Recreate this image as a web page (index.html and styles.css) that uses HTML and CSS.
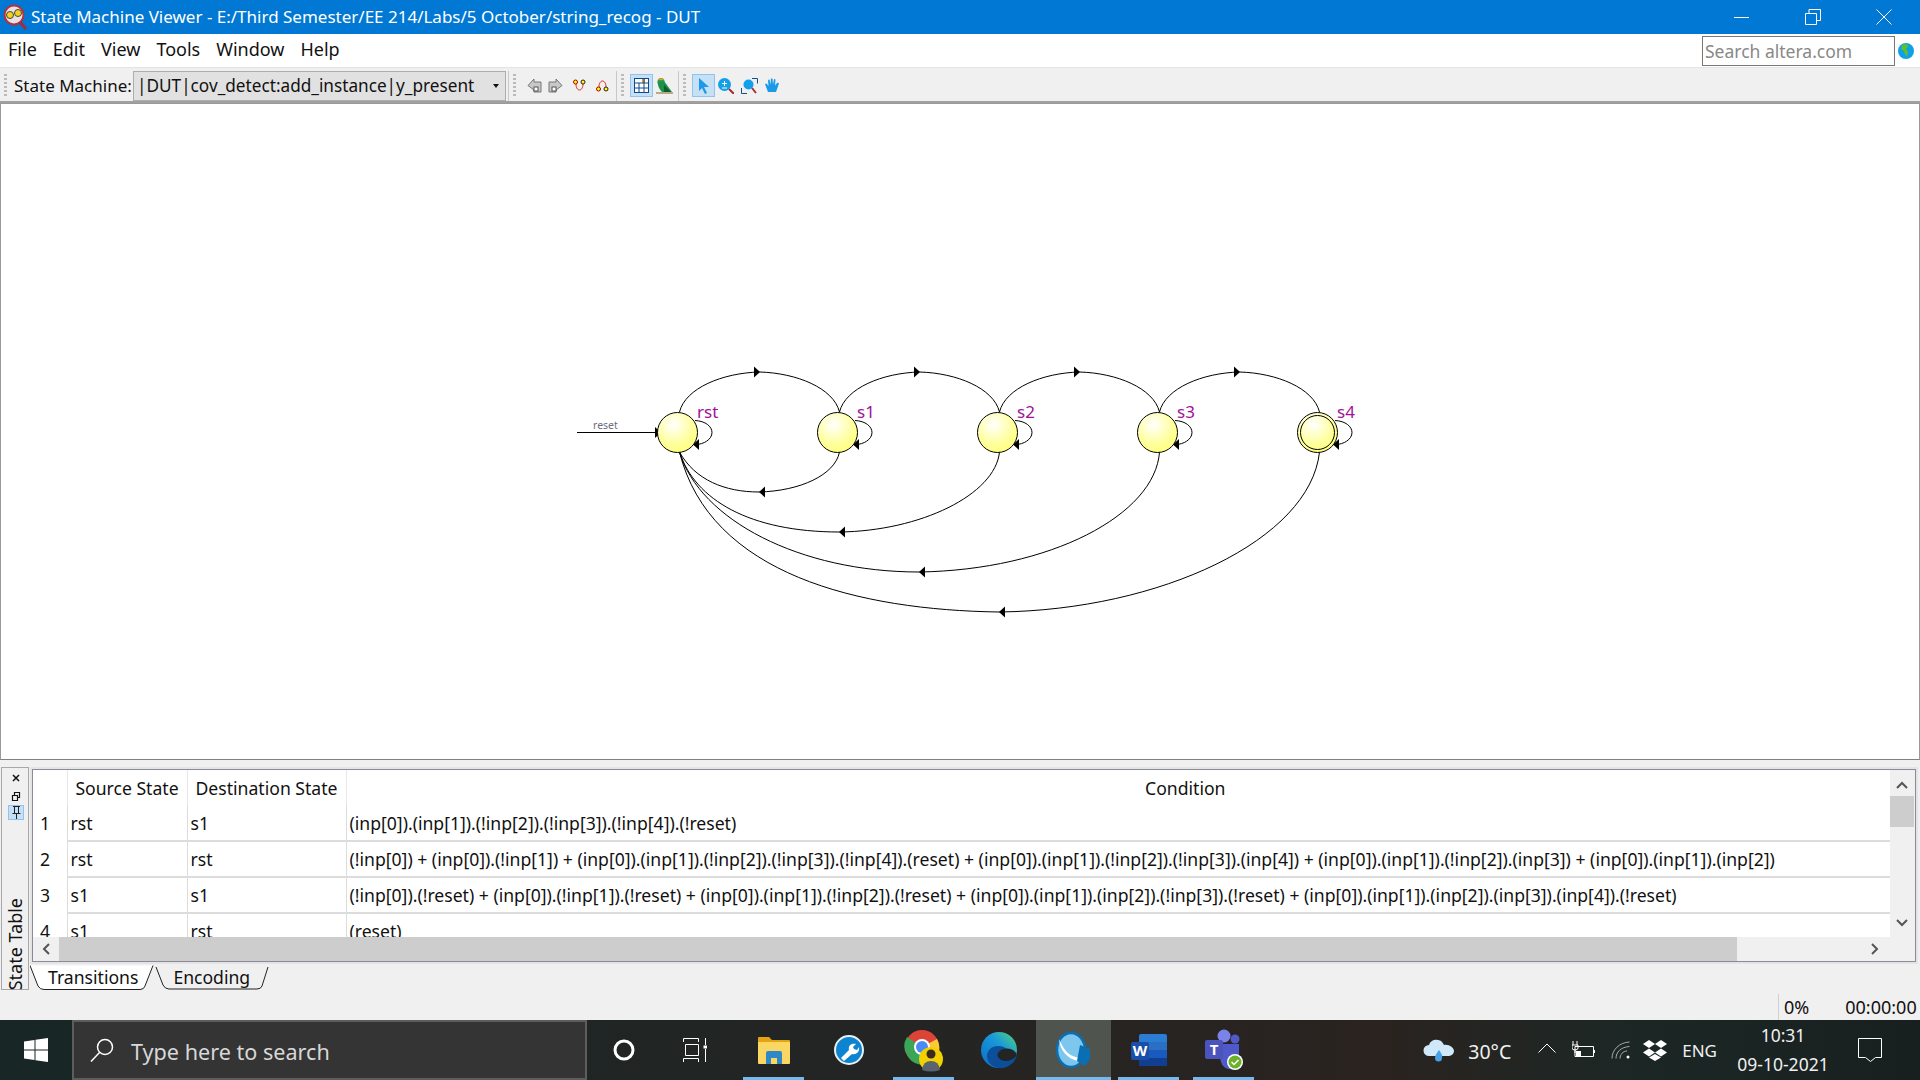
FILE: index.html

```html
<!DOCTYPE html>
<html lang="en">
<head>
    <meta charset="UTF-8">
    <title>State Machine Viewer</title>
    <link rel="stylesheet" href="styles.css">
</head>
<body>
<div class="app">
    <header class="titlebar">
        <svg class="app-icon" width="26" height="26" viewBox="0 0 26 26">
            <circle cx="12" cy="11" r="9.500" fill="#e8e0e4" stroke="#b03040" stroke-width="2"/>
            <circle cx="8" cy="11" r="3.500" fill="#f2d21f" stroke="#443"/>
            <circle cx="16" cy="9" r="3.500" fill="#f2d21f" stroke="#443"/>
            <path d="M18 18l6 7" stroke="#a02c3c" stroke-width="3"/>
        </svg>
        <span class="title-text">State Machine Viewer - E:/Third Semester/EE 214/Labs/5 October/string_recog - DUT</span>
        <div class="win-buttons">
            <svg width="16" height="16" viewBox="0 0 16 16"><path d="M0 8.500h15" stroke="#fff"/></svg>
            <svg width="16" height="16" viewBox="0 0 16 16" fill="none" stroke="#fff"><path d="M.5 4.500h11v11H.5zM4 4V.5h11.500v11H12"/></svg>
            <svg width="16" height="16" viewBox="0 0 16 16"><path d="M.5.5l15 15M15.500.5l-15 15" stroke="#fff"/></svg>
        </div>
    </header>

    <nav class="menubar">
        <a>File</a><a>Edit</a><a>View</a><a>Tools</a><a>Window</a><a>Help</a>
        <div class="search-altera">
            <div class="search-input">Search altera.com</div>
            <svg width="16" height="16" viewBox="0 0 16 16">
                <circle cx="8" cy="8" r="8" fill="#10a0e8"/>
                <path d="M4 2l5-1 1 3-2 2 2 3-1 5-2-3-1-3-3-2z" fill="#5fc02c"/>
            </svg>
        </div>
    </nav>

    <div class="toolbar">
        <span class="grip grip-first"></span>
        <label class="combo-label">State Machine:</label>
        <div class="combo">|DUT|cov_detect:add_instance|y_present<span class="combo-arrow"></span></div>
        <span class="sep"></span><span class="grip"></span>
        <div class="tools nav-tools">
            <svg width="15" height="15" viewBox="0 0 15 15"><path d="M7 1v3h7v10H7v-2L1 7.500 7 1z" fill="#c8c8c8" stroke="#777"/><rect x="7" y="9" width="4" height="4" fill="#fff" stroke="#555"/></svg>
            <svg width="15" height="15" viewBox="0 0 15 15"><path d="M8 1v3H1v10h7v-2l6-4.500L8 1z" fill="#c8c8c8" stroke="#777"/><rect x="4" y="9" width="4" height="4" fill="#fff" stroke="#555"/></svg>
            <svg width="13" height="14" viewBox="0 0 13 14" fill="none"><path d="M3 5c0 8 7 8 7 0" stroke="#d22"/><circle cx="2.500" cy="3" r="2" fill="#ff0" stroke="#a00"/><circle cx="10" cy="3" r="2" fill="#ff0" stroke="#222"/></svg>
            <svg width="13" height="14" viewBox="0 0 13 14" fill="none"><path d="M3 8c0-8 7-8 7 0" stroke="#d22"/><circle cx="2.500" cy="10" r="2" fill="#ff0" stroke="#a00"/><circle cx="10" cy="10" r="2" fill="#ff0" stroke="#222"/></svg>
        </div>
        <span class="sep"></span><span class="grip"></span>
        <div class="tools view-tools">
            <div class="tool-on">
                <svg width="15" height="15" viewBox="0 0 15 15"><rect x=".5" y=".5" width="14" height="14" fill="#fff" stroke="#0c4a90"/><rect x="8" y="1" width="3" height="4" fill="#f39a1e"/><path d="M1 5h13M1 10h13M5 5v9M10 1v13" stroke="#0c4a90"/></svg>
            </div>
            <svg width="17" height="17" viewBox="0 0 17 17"><path d="M0 16h17" stroke="#b9a98a" stroke-width="2"/><circle cx="5" cy="4.500" r="3.500" fill="#2fa050"/><path d="M2 3a3.500 3.500 0 0 1 6 0z" fill="#f09a20"/><path d="M1.500 5C2 10 4 13 6 15h10L8 4z" fill="#1f9048"/><path d="M8 8l7 7H8z" fill="#0b5f30"/></svg>
        </div>
        <span class="sep"></span><span class="grip"></span>
        <div class="tools zoom-tools">
            <div class="tool-on">
                <svg width="13" height="17" viewBox="0 0 13 17"><path d="M2 1l10 9H7l3 6-2 1-3-6-3 3z" fill="#1a9ae8"/></svg>
            </div>
            <svg width="16" height="16" viewBox="0 0 16 16"><circle cx="6.500" cy="6.500" r="6.500" fill="#12a0ea"/><path d="M6.500 3v5M4 5.500h5M4 10h5" stroke="#fff"/><path d="M11 11l5 5" stroke="#a03030" stroke-width="2"/></svg>
            <svg width="17" height="16" viewBox="0 0 17 16" fill="none"><path d="M11 .5h5.500v5M.5 10v5.500H6" stroke="#12508c"/><circle cx="7.500" cy="6.500" r="5" fill="#12a0ea"/><path d="M11 10l4 5" stroke="#a03030" stroke-width="2"/></svg>
            <svg width="15" height="15" viewBox="0 0 15 15"><path d="M3 14L0 6l1.500-.5L3.500 8 3 2l1.500-.5L5.500 6.500 6 .5h1.500l.5 6 1-5.500 1.500.5-.5 6 2.500-3 1.500 1L11 14z" fill="#1a9ae8"/></svg>
        </div>
    </div>

    <main class="canvas">
        <svg class="diagram" viewBox="1 104 1918 655" width="1918" height="655">
            <defs>
                <radialGradient id="ball" cx="40%" cy="30%" r="70%">
                    <stop offset="0" stop-color="#ffffff"/>
                    <stop offset="0.7" stop-color="#ffff9c"/>
                    <stop offset="1" stop-color="#ffff80"/>
                </radialGradient>
                <path id="arrow-right" d="M0 -5.500L6 0L0 5.500z" fill="#000"/>
                <path id="arrow-left" d="M6 -5.500L0 0L6 5.500z" fill="#000"/>
                <g id="state">
                    <circle r="20" fill="url(#ball)" stroke="#000"/>
                    <path d="M17.500 -12 C28 -11.500 34.500 -6 34.500 0 C34.500 7 26 12 18 12" fill="none" stroke="#000"/>
                    <use href="#arrow-left" x="15.500" y="12"/>
                </g>
                <path id="hop" d="M0 0 C6 -24 43 -39 80 -40 C117 -39 154 -24 160 0" fill="none" stroke="#000"/>
            </defs>

            <path class="edge" d="M577 432.500H656"/>
            <path d="M655 427l6 5.500-6 5.500z" fill="#000"/>
            <text class="input-label" x="593" y="429">reset</text>

            <use href="#hop" x="679.500" y="412"/>
            <use href="#hop" x="839.500" y="412"/>
            <use href="#hop" x="999.500" y="412"/>
            <use href="#hop" x="1159.500" y="412"/>
            <use href="#arrow-right" x="754" y="372"/>
            <use href="#arrow-right" x="914" y="372"/>
            <use href="#arrow-right" x="1074" y="372"/>
            <use href="#arrow-right" x="1234" y="372"/>

            <path class="edge" d="M839.500 452 C835 475 800 491 759 492 C725 492 695 480 679.500 452"/>
            <path class="edge" d="M999.500 452 C995 495 920 531 839.500 532 C750 532 695 500 679.500 452"/>
            <path class="edge" d="M1159.500 452 C1155 515 1050 570 919 572 C800 572 700 520 679.500 452"/>
            <path class="edge" d="M1319.500 452 C1310 540 1160 610 999 612 C860 610 710 575 679.500 452"/>
            <use href="#arrow-left" x="759" y="492"/>
            <use href="#arrow-left" x="839" y="532"/>
            <use href="#arrow-left" x="919" y="572"/>
            <use href="#arrow-left" x="999" y="612"/>

            <use href="#state" x="677.500" y="432.500"/>
            <use href="#state" x="837.500" y="432.500"/>
            <use href="#state" x="997.500" y="432.500"/>
            <use href="#state" x="1157.500" y="432.500"/>
            <use href="#state" x="1317.500" y="432.500"/>
            <circle cx="1317.500" cy="432.500" r="17" fill="none" stroke="#000"/>

            <text class="state-name" x="697" y="418">rst</text>
            <text class="state-name" x="857" y="418">s1</text>
            <text class="state-name" x="1017" y="418">s2</text>
            <text class="state-name" x="1177" y="418">s3</text>
            <text class="state-name" x="1337" y="418">s4</text>
        </svg>
    </main>

    <section class="panel">
        <div class="dock-strip">
            <svg width="10" height="44" viewBox="0 0 10 44" class="dock-icons">
                <path d="M2 2l6 6M8 2l-6 6" stroke="#111" stroke-width="1.500"/>
                <path d="M1.500 22.500h5v5h-5zM3.500 22v-2.500h5v5H7" fill="none" stroke="#111" stroke-width="1.200"/>
            </svg>
            <div class="dock-pin">
                <svg width="9" height="13" viewBox="0 0 9 13" fill="none" stroke="#222"><path d="M1 .5h7M2.500.5v7M6.500.5v7M.5 7.500h8M4.500 8v5"/></svg>
            </div>
            <div class="dock-title">State Table</div>
        </div>
        <div class="panel-main">
            <div class="frame">
                <div class="frame-top">
                    <div class="table-clip">
                        <table class="state-table">
                            <colgroup>
                                <col class="col-num"><col class="col-src"><col class="col-dst"><col>
                            </colgroup>
                            <thead>
                                <tr><th></th><th>Source State</th><th>Destination State</th><th class="th-cond">Condition</th></tr>
                            </thead>
                            <tbody>
                                <tr><td class="num">1</td><td>rst</td><td>s1</td><td>(inp[0]).(inp[1]).(!inp[2]).(!inp[3]).(!inp[4]).(!reset)</td></tr>
                                <tr><td class="num">2</td><td>rst</td><td>rst</td><td>(!inp[0]) + (inp[0]).(!inp[1]) + (inp[0]).(inp[1]).(!inp[2]).(!inp[3]).(!inp[4]).(reset) + (inp[0]).(inp[1]).(!inp[2]).(!inp[3]).(inp[4]) + (inp[0]).(inp[1]).(!inp[2]).(inp[3]) + (inp[0]).(inp[1]).(inp[2])</td></tr>
                                <tr><td class="num">3</td><td>s1</td><td>s1</td><td>(!inp[0]).(!reset) + (inp[0]).(!inp[1]).(!reset) + (inp[0]).(inp[1]).(!inp[2]).(!reset) + (inp[0]).(inp[1]).(inp[2]).(!inp[3]).(!reset) + (inp[0]).(inp[1]).(inp[2]).(inp[3]).(inp[4]).(!reset)</td></tr>
                                <tr><td class="num">4</td><td>s1</td><td>rst</td><td>(reset)</td></tr>
                            </tbody>
                        </table>
                    </div>
                    <div class="vscroll">
                        <svg width="12" height="8" viewBox="0 0 12 8" class="v-up"><path d="M1 7l5-5 5 5" fill="none" stroke="#555" stroke-width="2"/></svg>
                        <div class="vthumb"></div>
                        <svg width="12" height="8" viewBox="0 0 12 8" class="v-down"><path d="M1 1l5 5 5-5" fill="none" stroke="#555" stroke-width="2"/></svg>
                    </div>
                </div>
                <div class="hscroll">
                    <svg width="8" height="12" viewBox="0 0 8 12" class="h-left"><path d="M7 1L2 6l5 5" fill="none" stroke="#555" stroke-width="2"/></svg>
                    <div class="hthumb"></div>
                    <svg width="8" height="12" viewBox="0 0 8 12" class="h-right"><path d="M1 1l5 5-5 5" fill="none" stroke="#555" stroke-width="2"/></svg>
                </div>
            </div>
            <div class="tabs">
                <svg class="tabs-outline" width="245" height="26" viewBox="0 0 245 26" fill="none" stroke="#222">
                    <path d="M0 .5L8 21q2 3.500 6 3.500h96q4 0 5-3.500L123 .500" fill="#fff"/>
                    <path d="M126 2l7 18q2 4 6 4h88q4 0 5-3l6-19"/>
                </svg>
                <span class="tab tab-first">Transitions</span>
                <span class="tab tab-second">Encoding</span>
            </div>
        </div>
    </section>

    <div class="statusbar">
        <span class="status-pct">0%</span>
        <span class="status-time">00:00:00</span>
    </div>

    <footer class="taskbar">
        <div class="start">
            <svg width="24" height="24" viewBox="0 0 24 24" fill="#fff"><path d="M0 3.500l10.500-1.500v9.500H0zM11.500 1.800L24 0v11.500H11.500zM0 12.500h10.500V22L0 20.500zM11.500 12.500H24V24l-12.500-1.800z"/></svg>
        </div>
        <div class="task-search">
            <svg width="24" height="24" viewBox="0 0 24 24" fill="none" stroke="#fff" stroke-width="1.500"><circle cx="15" cy="9" r="7.500"/><path d="M9.500 14.500L1 23.500"/></svg>
            <span>Type here to search</span>
        </div>
        <div class="slot"><svg width="22" height="22" viewBox="0 0 22 22"><circle cx="11" cy="11" r="9" fill="none" stroke="#fff" stroke-width="3"/></svg></div>
        <div class="slot slot-taskview">
            <svg width="24" height="24" viewBox="0 0 24 24" fill="none" stroke="#fff"><path d="M.5 4V.5h15V4M2.500 6.500h13v11h-13zM.5 24v-3.500h15V24M22.500 0v7M22.500 11v13"/><rect x="20.500" y="7.500" width="4" height="3" fill="#fff" stroke="none"/></svg>
        </div>
        <div class="slot running">
            <svg width="32" height="27" viewBox="0 0 32 27"><path d="M0 1q0-1 1-1h10l3 3h17q1 0 1 1v4H0z" fill="#e3a410"/><path d="M0 5h32v21q0 1-1 1H1q-1 0-1-1z" fill="#fad663"/><path d="M8 27V16q0-2 2-2h12q2 0 2 2v11h-5v-6h-6v6z" fill="#2f88c8"/></svg>
        </div>
        <div class="slot">
            <svg width="30" height="30" viewBox="0 0 30 30"><circle cx="15" cy="15" r="14" fill="#0d84d0" stroke="#e8f0f4" stroke-width="2"/><path d="M7 23l8-8c-1-4 2-7 7-6l-3 3 1 2 3 1 2-3c1 5-3 8-7 7l-8 7z" fill="#fff"/></svg>
        </div>
        <div class="slot running">
            <svg width="40" height="44" viewBox="0 0 40 44">
                <circle cx="18" cy="19" r="17" fill="#dc4437"/>
                <path d="M18 19L3 27a17 17 0 0 1 0-18z" fill="#3aa757"/>
                <path d="M18 19l15-8a17 17 0 0 1-4 22z" fill="#fcc934"/>
                <path d="M3 27a17 17 0 0 0 26 6l-11-14z" fill="#3aa757"/>
                <circle cx="18" cy="19" r="8" fill="#fff"/><circle cx="18" cy="19" r="6" fill="#4a8af4"/>
                <circle cx="27" cy="31" r="12" fill="#f2d100"/>
                <circle cx="27" cy="26" r="4.500" fill="#3c2a20"/>
                <path d="M18 42q1-9 9-9t9 9q-9 3-18 0z" fill="#5a6470"/>
            </svg>
        </div>
        <div class="slot">
            <svg width="36" height="36" viewBox="0 0 36 36">
                <defs>
                    <linearGradient id="edge-fill" x1="0" y1="1" x2="1" y2="0">
                        <stop offset="0" stop-color="#0a6cc8"/>
                        <stop offset="0.6" stop-color="#1a9ad8"/>
                        <stop offset="1" stop-color="#58d872"/>
                    </linearGradient>
                </defs>
                <circle cx="18" cy="18" r="18" fill="url(#edge-fill)"/>
                <path d="M36 22c-3 9-10 14-17 14-8 0-13-6-13-12 0-6 5-10 11-10 5 0 8 2 10 4z" fill="#0b4f9a"/>
                <ellipse cx="26" cy="23" rx="9.500" ry="6.500" fill="#232524"/>
                <path d="M15 22c0 4 4 7 9 7 5 0 9-2 12-6-2 8-9 13-16 13-6 0-7-8-5-14z" fill="#0b4f9a"/>
            </svg>
        </div>
        <div class="slot running active">
            <svg width="36" height="38" viewBox="0 0 36 38">
                <ellipse cx="15" cy="19" rx="14" ry="17" fill="#7dc6ee" stroke="#0a6fb2" stroke-width="2.500"/>
                <path d="M3 8c6 14 12 18 22 19l-3 3C12 28 4 20 3 8z" fill="#fff"/>
                <path d="M24 14l10 4v10l-5 7-8-5z" fill="#0a6fb2"/>
            </svg>
        </div>
        <div class="slot running">
            <svg width="36" height="32" viewBox="0 0 36 32">
                <rect x="8" y="0" width="28" height="32" rx="2" fill="#2b7cd3"/>
                <rect x="8" y="8" width="28" height="8" fill="#2a6fc4"/>
                <rect x="8" y="16" width="28" height="8" fill="#185abd"/>
                <rect x="8" y="24" width="28" height="8" fill="#103f91"/>
                <rect x="0" y="8" width="18" height="18" rx="2" fill="#1b4ea8"/>
                <text class="word-w" x="9" y="22">W</text>
            </svg>
        </div>
        <div class="slot running">
            <svg width="38" height="42" viewBox="0 0 38 42">
                <circle cx="19" cy="7" r="6.500" fill="#7b83eb"/><circle cx="30" cy="10" r="4.500" fill="#5059c9"/>
                <path d="M12 15h22v14a9 9 0 0 1-18 4z" fill="#5059c9"/>
                <rect x="0" y="11" width="18" height="19" rx="2" fill="#4b53bc"/>
                <text class="word-w" x="9" y="26">T</text>
                <circle cx="30" cy="33" r="8" fill="#fff"/><circle cx="30" cy="33" r="6.500" fill="#6bb12b"/>
                <path d="M26.500 33l2.500 2.500 4.500-4.500" fill="none" stroke="#fff" stroke-width="1.500"/>
            </svg>
        </div>

        <div class="tray">
            <svg class="tray-cloud" width="31" height="23" viewBox="0 0 31 23"><path d="M6 17a5.500 5.500 0 0 1 0-11c1-4 5-6 9-5 3 0 5 3 6 5 5-1 10 3 10 6 0 3-3 5-6 5z" fill="#cfe8fa"/><path d="M16 11q4 5 3 8a3 3 0 0 1-7 0q0-3 4-8z" fill="#4aa0e6"/></svg>
            <span class="tray-temp">30°C</span>
            <svg class="tray-chevron" width="18" height="10" viewBox="0 0 18 10" fill="none" stroke="#fff"><path d="M.5 9.500L9 1l8.500 8.500"/></svg>
            <svg class="tray-battery" width="23" height="18" viewBox="0 0 23 18" fill="none" stroke="#fff"><path d="M3 5.500h18.500v10H3zM1 0v4M5 0v4M0 4h6v3q0 2-3 2t-3-2zM3 9v3"/><rect x="4" y="10" width="5" height="5" fill="#fff" stroke="none"/><path d="M22.500 9v3"/></svg>
            <svg class="tray-wifi" width="19" height="18" viewBox="0 0 19 18" fill="none" stroke="#aaa"><path d="M1 17.500C1 9 8 1.500 18.500 1"/><path d="M5 17.500C5 11 10 6 18.500 5.500"/><path d="M9 17.500c0-4 3-7.500 7-7.500"/><circle cx="17" cy="16" r="1.500" fill="#fff" stroke="none"/></svg>
            <svg class="tray-dropbox" width="24" height="21" viewBox="0 0 24 21" fill="#fff"><path d="M6 0l6 4-6 4-6-4zM18 0l6 4-6 4-6-4zM6 8.500l6 4-6 4-6-4zM18 8.500l6 4-6 4-6-4zM12 14l6 3.500-6 3.500-6-3.500z"/></svg>
            <span class="tray-lang">ENG</span>
            <div class="tray-clock"><span>10:31</span><span>09-10-2021</span></div>
            <svg class="tray-note" width="24" height="24" viewBox="0 0 24 24" fill="none" stroke="#fff"><path d="M.5.5h23v19h-6l-5 4-5-4h-7z"/></svg>
        </div>
    </footer>
</div>
</body>
</html>
```

FILE: styles.css

```css
* {
    box-sizing: border-box;
}

body {
    margin: 0;
    font-family: "Noto Sans", "Open Sans", sans-serif;
    background-color: #f0f0f0;
    color: #111;
}

svg {
    display: block;
    flex: none;
}

.app {
    display: flex;
    flex-direction: column;
    width: 1920px;
    height: 1080px;
    overflow: hidden;
}

/* title bar */
.titlebar {
    display: flex;
    align-items: center;
    height: 34px;
    padding-left: 2px;
    background-color: #0078d4;
    color: #fff;
    font-size: 17px;
}

.title-text {
    margin-left: 3px;
}

.win-buttons {
    display: flex;
    gap: 55px;
    margin-left: auto;
    margin-right: 28px;
}

/* menu bar */
.menubar {
    display: flex;
    align-items: center;
    gap: 16px;
    height: 34px;
    padding-left: 8px;
    padding-right: 6px;
    background-color: #fff;
    font-size: 18px;
}

.menubar a {
    margin-bottom: 3px;
}

.search-altera {
    display: flex;
    align-items: center;
    gap: 3px;
    margin-left: auto;
}

.search-input {
    width: 193px;
    height: 30px;
    padding-left: 2px;
    border: 1.500px solid #777;
    color: #888;
    font-size: 17.500px;
    line-height: 28px;
}

/* toolbar */
.toolbar {
    display: flex;
    align-items: center;
    height: 36px;
    padding-top: 2px;
    border-bottom: 2px solid #a0a0a0;
    border-top: 1px solid #e4e4e4;
    font-size: 17px;
}

.grip {
    width: 3px;
    height: 24px;
    margin-left: 4px;
    background-image: linear-gradient(#bbb 50%, transparent 50%);
    background-size: 3px 4px;
}

.combo-label {
    margin-left: 7px;
    width: 119px;
    white-space: nowrap;
}

.combo {
    position: relative;
    width: 373px;
    height: 30px;
    padding-left: 3px;
    border: 1px solid #adadad;
    background-color: #e1e1e1;
    font-size: 17.200px;
    line-height: 28px;
    white-space: nowrap;
}

.combo-arrow {
    position: absolute;
    right: 6px;
    top: 12px;
    border-left: 3.500px solid transparent;
    border-right: 3.500px solid transparent;
    border-top: 4px solid #111;
}

.sep {
    width: 1px;
    height: 30px;
    margin-left: 2px;
    background-color: #c8c8c8;
}

.tools {
    display: flex;
    align-items: center;
}

.nav-tools {
    gap: 6px;
    margin-left: 11px;
    margin-right: 5px;
}

.nav-tools svg:nth-child(3) {
    margin-left: 4px;
    margin-right: 4px;
}

.view-tools {
    gap: 3px;
    margin-left: 6px;
    margin-right: 3px;
}

.zoom-tools {
    gap: 7px;
    margin-left: 6px;
}

.zoom-tools .tool-on {
    margin-right: -4px;
}

.tool-on {
    display: flex;
    align-items: center;
    justify-content: center;
    width: 23px;
    height: 23px;
    border: 1px solid #90c4ee;
    background-color: #c6e0f6;
}

/* diagram */
.canvas {
    height: 657px;
    border: 1px solid #9a9a9a;
    border-bottom-color: #7c8088;
    background-color: #fff;
}

.edge {
    fill: none;
    stroke: #000;
}

.state-name {
    fill: #a0109a;
    font-size: 17px;
}

.input-label {
    fill: #6c6c80;
    font-size: 10.500px;
}

/* bottom panel */
.panel {
    display: flex;
    height: 223px;
    margin-top: 7px;
    padding-right: 4px;
}

.dock-strip {
    position: relative;
    width: 28px;
    margin-left: 1px;
    border: 1px solid #a8a8a8;
    background-color: #f0f0f0;
}

.dock-icons {
    margin: 5px 0 0 9px;
}

.dock-pin {
    display: flex;
    align-items: center;
    justify-content: center;
    width: 16px;
    height: 15px;
    margin: -12px 0 0 6px;
    border: 1px solid #90c4ee;
    background-color: #c6e0f6;
}

.dock-title {
    position: absolute;
    left: 1px;
    bottom: -1px;
    writing-mode: vertical-rl;
    transform: rotate(180deg);
    font-size: 18px;
    line-height: 24px;
    white-space: nowrap;
}

.panel-main {
    flex: 1;
    margin-left: 3px;
    padding-top: 2px;
}

.frame {
    width: 1884px;
    height: 193px;
    border: 1px solid #8a8a98;
    box-shadow: 0 0 0 2px #e4e4e4;
    background-color: #f0f0f0;
}

.frame-top {
    display: flex;
    height: 167px;
}

.table-clip {
    width: 1857px;
    height: 167px;
    overflow: hidden;
    background-color: #fff;
}

.state-table {
    width: 1857px;
    table-layout: fixed;
    border-collapse: collapse;
    font-size: 17.600px;
}

.col-num {
    width: 34px;
}

.col-src {
    width: 120px;
}

.col-dst {
    width: 159px;
}

.state-table th {
    height: 35px;
    font-weight: 400;
    border-left: 1px solid #e8e8e8;
    text-align: center;
    padding: 0;
}

.state-table th:first-child {
    border-left: 0;
}

.state-table th.th-cond {
    padding-left: 134px;
}

.state-table td {
    height: 36px;
    padding: 0 0 0 3px;
    border-left: 1px solid #dcdcdc;
    border-bottom: 2px solid #dcdcdc;
    white-space: nowrap;
    overflow: hidden;
}

.state-table td.num {
    padding-left: 7px;
    border-left: 0;
    border-bottom: 0;
}

.vscroll {
    position: relative;
    width: 24px;
}

.vthumb {
    width: 24px;
    height: 31px;
    margin-top: 26px;
    background-color: #cdcdcd;
}

.v-up {
    position: absolute;
    left: 6px;
    top: 11px;
}

.v-down {
    position: absolute;
    left: 6px;
    bottom: 10px;
}

.hscroll {
    display: flex;
    align-items: center;
    width: 1857px;
    height: 24px;
}

.h-left {
    margin-left: 9px;
}

.hthumb {
    width: 1678px;
    height: 24px;
    margin-left: 9px;
    background-color: #cdcdcd;
}

.h-right {
    margin-left: 134px;
}

.tabs {
    position: relative;
    display: flex;
    height: 26px;
    margin-top: 3px;
    font-size: 17.600px;
    line-height: 25px;
}

.tabs-outline {
    position: absolute;
    left: -2px;
    top: 0;
}

.tab {
    position: relative;
}

.tab-first {
    margin-left: 16px;
}

.tab-second {
    margin-left: 35px;
}

/* status bar */
.statusbar {
    display: flex;
    align-items: center;
    height: 30px;
    padding-top: 3px;
    font-size: 18px;
}

.status-pct {
    margin-left: 1778px;
    padding-left: 5px;
    border-left: 1px solid #d0d0d0;
    line-height: 26px;
}

.status-time {
    margin-left: 36px;
    white-space: nowrap;
}

/* taskbar */
.taskbar {
    display: flex;
    align-items: center;
    height: 60px;
    background: linear-gradient(90deg, #182626 0, #222524 40%, #2a2320 72%, #1c2725 85%, #18201f 100%);
    color: #fff;
}

.start {
    display: flex;
    justify-content: center;
    width: 72px;
}

.task-search {
    display: flex;
    align-items: center;
    gap: 17px;
    width: 515px;
    height: 60px;
    margin-right: -1px;
    padding-left: 16px;
    border: 2px solid #5d5d5d;
    background-color: #343434;
    color: #d8d8d8;
    font-size: 21.600px;
}

.task-search span {
    padding-top: 3px;
}

.slot {
    display: flex;
    align-items: center;
    justify-content: center;
    position: relative;
    width: 75px;
    height: 60px;
}

.slot-taskview svg {
    margin-right: 8px;
}

.running::after {
    content: "";
    position: absolute;
    left: 7px;
    right: 7px;
    bottom: 0;
    height: 3px;
    background-color: #76b9ed;
}

.active {
    background-color: #50544f;
}

.active::after {
    left: 0;
    right: 0;
}

.word-w {
    fill: #fff;
    font-size: 15px;
    font-weight: 700;
    text-anchor: middle;
}

.tray {
    display: flex;
    align-items: center;
    margin-left: auto;
    font-size: 18px;
    color: #f0f0f0;
    padding-right: 38px;
}

.tray-temp {
    margin-left: 14px;
    font-size: 19.500px;
    line-height: 1;
    margin-top: 4px;
}

.tray-chevron {
    margin-left: 27px;
    margin-top: -4px;
}

.tray-battery {
    margin-left: 16px;
}

.tray-wifi {
    margin-left: 16px;
}

.tray-dropbox {
    margin-left: 13px;
}

.tray-lang {
    margin-left: 15px;
    font-size: 17px;
}

.tray-clock {
    display: flex;
    flex-direction: column;
    align-items: center;
    gap: 6px;
    width: 100px;
    margin-left: 16px;
    font-size: 17.500px;
    line-height: 23px;
}

.tray-note {
    margin-left: 25px;
}
```
